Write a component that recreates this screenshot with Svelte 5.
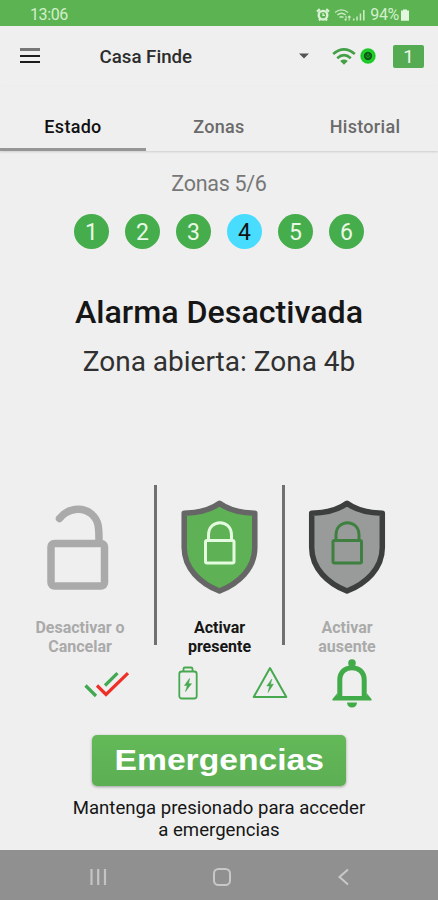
<script>
  const tabs = ['Estado', 'Zonas', 'Historial'];
  const zones = [1, 2, 3, 4, 5, 6];
  const openZone = 4;

  let activeTab = 'Estado';

  const selectTab = (tab) => {
    activeTab = tab;
  }
</script>

<div class="screen">
  <header class="statusBar">
    <span class="clock">13:06</span>
    <div class="statusIcons">
      <svg class="alarm" width="14" height="14" viewBox="0 0 14 14">
        <path d="M1 3.6 3.8 1.2M13 3.6 10.2 1.2M3 12.4l1-1M11 12.4l-1-1" stroke="#d9f2d5" stroke-width="2.2" />
        <circle cx="7" cy="7.2" r="4.3" fill="none" stroke="#d9f2d5" stroke-width="2.4" />
        <path d="M7 4.8v2.6h2" fill="none" stroke="#d9f2d5" stroke-width="1.2" />
      </svg>
      <svg class="wifiSmall" width="18" height="14" viewBox="0 0 18 14" fill="none" stroke="#c9eac3" stroke-width="1.4">
        <path d="M1 4.5Q7.5-.8 14 4.5M3.3 7Q7.5 3.5 11.7 7M5.5 9.5Q7.5 7.8 9.5 9.5" />
        <path d="M12 8v4.5M10.6 11l1.4 1.6M15.2 12.5V8M13.9 9.5l1.3-1.5 1.4 1.5" stroke-width="1.1" />
      </svg>
      <svg class="signal" width="14" height="14" viewBox="0 0 14 14" fill="#c9eac3">
        <path d="M1 10.5h1.5V12.5H1zM4.3 8.5h1.5v4H4.3zM7.7 5.5h1.5v7H7.7zM11 2h1.6v10.5H11z" />
      </svg>
      <span class="percent">94%</span>
      <svg class="charge" width="10" height="14" viewBox="0 0 10 14" fill="#e3f6df">
        <path d="M3 1.5h4V2.5h2v10.3H1V2.5H3z" />
      </svg>
    </div>
  </header>

  <div class="toolbar">
    <button class="menu" aria-label="Menú">
      <span class="soft"></span><span></span><span></span>
    </button>
    <span class="place">Casa Finde</span>
    <svg class="caret" width="10" height="6" viewBox="0 0 10 6"><path d="M0 .5h10L5 5.5z" fill="#555" /></svg>
    <svg class="wifi" width="24" height="17" viewBox="0 0 24 17" fill="none" stroke="#43a047" stroke-width="2.6">
      <path d="M1.2 6Q12-3.2 22.8 6M5.2 10.2Q12 4.2 18.8 10.2" />
      <path d="M8.2 12.9Q12 10.1 15.8 12.9L12 16.8z" fill="#43a047" stroke="none" />
    </svg>
    <svg class="led" width="16" height="16" viewBox="0 0 16 16">
      <circle cx="8" cy="8" r="7.7" fill="#1fd62c" />
      <circle cx="8" cy="8" r="6.4" fill="none" stroke="#23b52d" stroke-width="1" />
      <circle cx="8" cy="8" r="4.2" fill="#0b5a12" />
      <path d="M5.8 7.5Q8 11.5 10.2 7.5" fill="none" stroke="#1a9e24" stroke-width="1.2" />
      <circle cx="8" cy="6.5" r="1.2" fill="#1a8a22" />
    </svg>
    <span class="counter">1</span>
  </div>

  <nav>
    {#each tabs as tab}
      <button class:active={tab === activeTab} on:click={() => selectTab(tab)}>{tab}</button>
    {/each}
  </nav>

  <main>
    <p class="zoneCount">Zonas 5/6</p>
    <div class="zones">
      {#each zones as zone}
        <span class="zone" class:open={zone === openZone}>{zone}</span>
      {/each}
    </div>
    <h1>Alarma Desactivada</h1>
    <p class="detail">Zona abierta: Zona 4b</p>

    <div class="actions">
      <button class="action disabled">
        <svg width="80" height="100" viewBox="0 0 80 100" fill="none" stroke="#aaa">
          <rect x="11" y="45.5" width="53.5" height="42.5" rx="3.5" stroke-width="7.5" />
          <path d="M19.5 20.5C27 10.5 42 8 51.5 16C59 22.5 59 29.5 59 44" stroke-width="7.5" stroke-linecap="round" />
        </svg>
        <span>Desactivar o<br />Cancelar</span>
      </button>
      <button class="action">
        <svg width="80" height="100" viewBox="0 0 80 100">
          <path d="M39.5 5.3C30.5 12 17.5 15 4.2 15.2V49.5C4.2 70.5 20.5 85.5 39.5 93C58.5 85.5 74.8 70.5 74.8 49.5V15.2C61.5 15 48.5 12 39.5 5.3Z" fill="#5eb255" stroke="#666" stroke-width="5.5" stroke-linejoin="round" />
          <rect x="25.5" y="42.5" width="28.5" height="22.5" rx="1.5" fill="none" stroke="#e4fbdf" stroke-width="3" />
          <path d="M28.5 42V37C28.5 20.5 51.5 20.5 51.5 37V42" fill="none" stroke="#e4fbdf" stroke-width="3" />
        </svg>
        <span>Activar<br />presente</span>
      </button>
      <button class="action disabled">
        <svg width="80" height="100" viewBox="0 0 80 100">
          <path d="M40 5.3C31 12 18 15 4.7 15.2V49.5C4.7 70.5 21 85.5 40 93C59 85.5 75.3 70.5 75.3 49.5V15.2C62 15 49 12 40 5.3Z" fill="#999b9b" stroke="#3d3f3f" stroke-width="5.5" stroke-linejoin="round" />
          <rect x="26" y="42.5" width="28.5" height="22.5" rx="1.5" fill="none" stroke="#3f8040" stroke-width="3" />
          <path d="M29 42V37C29 20.5 52 20.5 52 37V42" fill="none" stroke="#3f8040" stroke-width="3" />
        </svg>
        <span>Activar<br />ausente</span>
      </button>
    </div>

    <div class="indicators">
      <svg class="checks" width="46" height="28" viewBox="0 0 46 28" fill="none" stroke-width="3.2">
        <path d="M1.5 15.5 12 26M21 15.5 33.5 3.2" stroke="#43a852" />
        <path d="M13 15.5 22 24.5 44 3.2" stroke="#ee3029" />
      </svg>
      <svg class="battery" width="20" height="36" viewBox="0 0 20 36" fill="none" stroke="#47a94f" stroke-width="1.8">
        <rect x="1.3" y="5.5" width="17.4" height="27" rx="2.5" />
        <path d="M5.5 5V2.8Q5.5 1.5 7 1.5H13Q14.5 1.5 14.5 2.8V5" />
        <path d="M11.5 12.5 6.5 19.5H9.3L7.5 25.5 13.5 17.7H10.6Z" fill="#47a94f" stroke-width=".6" />
      </svg>
      <svg class="power" width="36" height="35" viewBox="0 0 36 35" fill="none" stroke="#47a94f" stroke-width="2">
        <path d="M18 2 34.3 31H1.7Z" stroke-linejoin="round" />
        <path d="M19.8 13 14.8 20H17.6L16 26.5 21.4 18.2H18.5Z" fill="#47a94f" stroke-width=".5" />
      </svg>
      <svg class="bell" width="40" height="49" viewBox="0 0 40 49">
        <path d="M7.8 38V21C7.8 4.5 32.2 4.5 32.2 21V38" fill="none" stroke="#41ab49" stroke-width="5" />
        <circle cx="20" cy="4" r="3.8" fill="#41ab49" />
        <path d="M5.5 34 .5 40V41.5H39.5V40L34.5 34V37H5.5ZM15 43.5H25Q24.5 48.5 20 48.5T15 43.5Z" fill="#41ab49" />
      </svg>
    </div>

    <button class="emergency"><span>Emergencias</span></button>
    <p class="hint">Mantenga presionado para acceder<br />a emergencias</p>
  </main>

  <footer>
    <svg width="18" height="18" viewBox="0 0 18 18" stroke="#c4c4c4" stroke-width="2.2"><path d="M2.5 1v16M9.2 1v16M16 1v16" /></svg>
    <svg width="18" height="20" viewBox="0 0 18 20"><rect x="1" y="2" width="16" height="16" rx="4.5" fill="none" stroke="#c8c8c8" stroke-width="2" /></svg>
    <svg width="14" height="18" viewBox="0 0 14 18"><path d="M12 1.5 3.5 9l8.5 7.5" fill="none" stroke="#c8c8c8" stroke-width="2" /></svg>
  </footer>
</div>

<style>
:global(body) {
  background-color: #efefef;
}
.screen {
  width: 438px;
  height: 900px;
  display: flex;
  flex-direction: column;
  overflow: hidden;
  background-color: #efefef;
  color: #161616;
  font-family: Roboto, sans-serif;
}
button {
  border: 0;
  padding: 0;
  background: none;
  color: inherit;
  font-family: inherit;
  cursor: pointer;
}
p, h1 {
  margin: 0;
}
svg {
  display: block;
  flex: none;
}
.statusBar {
  height: 26px;
  flex: none;
  display: flex;
  justify-content: space-between;
  align-items: center;
  padding: 3px 28px 0 30px;
  box-sizing: border-box;
  background-color: #5cb351;
  color: #d3efce;
  font-size: 16px;
}
.clock {
  letter-spacing: -.4px;
}
.statusIcons {
  display: flex;
  align-items: center;
}
.wifiSmall {
  margin-left: 4px;
}
.percent {
  margin-left: 4px;
  letter-spacing: -.3px;
}
.charge {
  margin-left: 1px;
}
.toolbar {
  height: 60px;
  flex: none;
  display: flex;
  align-items: center;
  padding: 0 14px 0 20px;
}
.menu {
  width: 20px;
  display: flex;
  flex-direction: column;
  gap: 4px;
  margin-bottom: 2px;
}
.menu span {
  height: 2px;
  background-color: #1c1c1c;
}
.menu span.soft {
  height: 3px;
  background-color: #777;
}
.place {
  margin-left: 59.5px;
  padding-top: 1px;
  font-size: 18.7px;
  font-weight: 500;
  color: #2c2c2c;
}
.caret {
  margin-left: auto;
}
.wifi {
  margin-left: 23px;
}
.led {
  margin-left: 4px;
}
.counter {
  width: 31px;
  height: 23px;
  margin-left: 17px;
  border-radius: 2px;
  background-color: #54ab52;
  color: #eef8ec;
  font-size: 19px;
  line-height: 23px;
  text-align: center;
}
nav {
  height: 65px;
  flex: none;
  display: grid;
  grid-template-columns: repeat(3, 1fr);
  box-shadow: 0 1px 2px rgba(0, 0, 0, .14);
}
nav button {
  padding-top: 18px;
  border-bottom: 3px solid transparent;
  font-size: 18px;
  font-weight: 500;
  letter-spacing: .3px;
  color: #6a6a6a;
}
nav button.active {
  border-bottom-color: #969696;
  color: #111;
}
main {
  flex: 1;
  display: flex;
  flex-direction: column;
  align-items: center;
}
.zoneCount {
  margin-top: 19px;
  font-size: 21.5px;
  letter-spacing: -.3px;
  line-height: 28px;
  color: #777;
}
.zones {
  display: flex;
  gap: 15.5px;
  margin-top: 15.5px;
}
.zone {
  width: 35.5px;
  height: 35.5px;
  border-radius: 50%;
  background-color: #45ad4b;
  color: #e9f8e6;
  font-size: 23px;
  line-height: 37px;
  text-align: center;
}
.zone.open {
  background-color: #48dcff;
  color: #111;
}
h1 {
  margin-top: 43px;
  font-size: 32.2px;
  font-weight: 500;
  line-height: 40px;
}
.detail {
  margin-top: 12px;
  font-size: 28px;
  line-height: 36px;
  color: #303030;
}
.actions {
  align-self: stretch;
  height: 160px;
  margin-top: 105px;
  padding: 0 26px;
  display: grid;
  grid-template-rows: 160px;
  grid-template-columns: 131px 128px 124px;
}
.action {
  height: 160px;
  box-sizing: border-box;
  display: flex;
  flex-direction: column;
  align-items: center;
  justify-content: flex-start;
  padding-top: 13px;
  font-size: 16px;
  font-weight: 700;
  line-height: 19px;
}
.action:not(:last-child) {
  border-right: 3px solid #707070;
}
.action.disabled {
  color: #aaa;
}
.action:first-child {
  padding-right: 20px;
}
.action span {
  margin-top: 20px;
}
.indicators {
  align-self: stretch;
  height: 49px;
  margin-top: 14px;
  padding-left: 84px;
  display: flex;
  align-items: center;
}
.battery {
  margin-left: 48px;
}
.power {
  margin-left: 54px;
}
.bell {
  margin-left: 44px;
}
.emergency {
  width: 254px;
  height: 51px;
  margin-top: 27px;
  border-radius: 5px;
  background: linear-gradient(#63b958, #5cae53);
  box-shadow: 0 1px 3px rgba(0, 0, 0, .35);
  color: #fff;
  font-family: "Liberation Sans", Arial, sans-serif;
  font-size: 29px;
  font-weight: 700;
}
.emergency span {
  display: inline-block;
  transform: scaleX(1.16);
}
.hint {
  margin-top: 11px;
  font-size: 18.6px;
  line-height: 22px;
  text-align: center;
}
footer {
  height: 50px;
  flex: none;
  display: flex;
  align-items: center;
  justify-content: space-between;
  padding: 3px 88px 0 89px;
  box-sizing: border-box;
  background-color: #909090;
}
</style>
